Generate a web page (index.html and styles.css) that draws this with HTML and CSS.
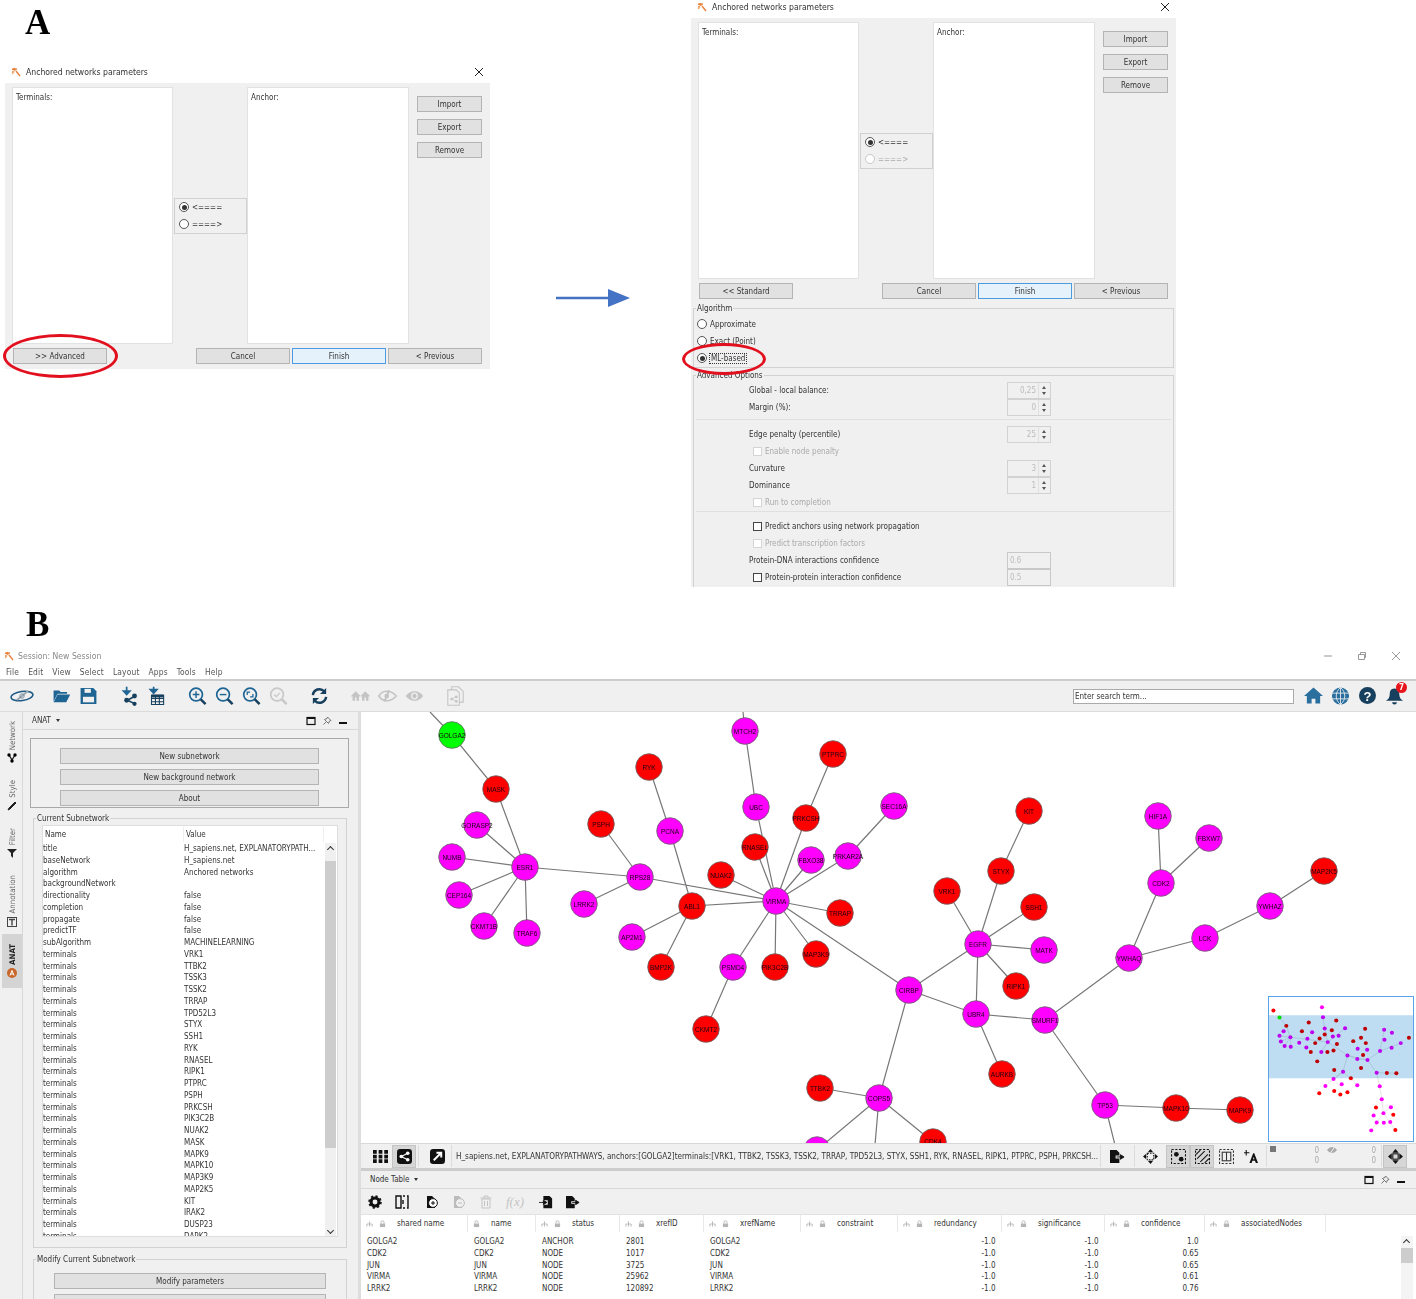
FILE: index.html
```html
<!DOCTYPE html>
<html lang="en">
<head>
  <meta charset="UTF-8">
  <title>Anchored networks figure</title>
  <link rel="stylesheet" href="styles.css">
</head>
<body>
  <svg class="defs" aria-hidden="true">
    <symbol id="wand" viewBox="0 0 10 10"><path d="M1 2l3 1M3 1l1 3M5 1v2M1 5h2M5 4l4 5" fill="none" stroke="#e8823a" stroke-width="1.4"/><path d="M1 7l2-2" stroke="#f3b27a" stroke-width="1.4"/></symbol>
    <symbol id="close" viewBox="0 0 10 10"><path d="M1 1l8 8M9 1l-8 8" stroke="#222" stroke-width="1"/></symbol>
    <symbol id="tree" viewBox="0 0 8 8"><path d="M4 1v3M1 7V4h6v3M4 4v3" fill="none" stroke="#b5b5b5" stroke-width="1"/></symbol>
    <symbol id="lock" viewBox="0 0 8 8"><rect x="1" y="3.5" width="6" height="4" fill="#b5b5b5"/><path d="M2.3 3.5V2a1.7 1.7 0 0 1 3.4 0v1.5" fill="none" stroke="#b5b5b5"/></symbol>
    <symbol id="win-max" viewBox="0 0 10 10"><rect x="1" y="1.5" width="8" height="7" fill="none" stroke="#111" stroke-width="1.2"/><rect x="1" y="1" width="8" height="2" fill="#111"/></symbol>
    <symbol id="win-pin" viewBox="0 0 10 10"><path d="M5.5 1L9 4.5 7.5 5 6.5 7.5 2.5 3.5 5 2.5zM4 6L1.5 8.5" fill="none" stroke="#666" stroke-width=".9"/></symbol>
    <symbol id="win-min" viewBox="0 0 10 10"><rect x="1" y="6" width="8" height="2" fill="#111"/></symbol>
  </svg>

  <div class="letter letter-a">A</div>

  <!-- panel A: standard dialog -->
  <section class="dialog dialog-std">
    <header class="dialog-title">
      <svg class="wand"><use href="#wand"/></svg>
      <span>Anchored networks parameters</span>
      <svg class="dialog-close"><use href="#close"/></svg>
    </header>
    <div class="dialog-panel">
      <div class="lists">
        <div class="list-box">Terminals:</div>
        <div class="direction">
          <label class="option"><i class="radio on"></i>&lt;====</label>
          <label class="option"><i class="radio"></i>====&gt;</label>
        </div>
        <div class="list-box">Anchor:</div>
        <div class="side-buttons">
          <button class="btn">Import</button>
          <button class="btn">Export</button>
          <button class="btn">Remove</button>
        </div>
      </div>
      <div class="dialog-actions">
        <button class="btn btn-wide">&gt;&gt; Advanced</button>
        <button class="btn btn-wide push">Cancel</button>
        <button class="btn btn-wide btn-default">Finish</button>
        <button class="btn btn-wide">&lt; Previous</button>
      </div>
    </div>
  </section>
  <div class="circle circle-advanced"></div>

  <svg class="next-arrow" viewBox="0 0 74 18"><path d="M0 9h54" stroke="#4472c4" stroke-width="2.4"/><path d="M52 0l22 9-22 9z" fill="#4472c4"/></svg>

  <!-- panel A: advanced dialog -->
  <section class="dialog dialog-adv">
    <header class="dialog-title">
      <svg class="wand"><use href="#wand"/></svg>
      <span>Anchored networks parameters</span>
      <svg class="dialog-close"><use href="#close"/></svg>
    </header>
    <div class="dialog-panel">
      <div class="lists">
        <div class="list-box">Terminals:</div>
        <div class="direction">
          <label class="option"><i class="radio on"></i>&lt;====</label>
          <label class="option muted"><i class="radio off"></i>====&gt;</label>
        </div>
        <div class="list-box">Anchor:</div>
        <div class="side-buttons">
          <button class="btn">Import</button>
          <button class="btn">Export</button>
          <button class="btn">Remove</button>
        </div>
      </div>
      <div class="dialog-actions">
        <button class="btn btn-wide">&lt;&lt; Standard</button>
        <button class="btn btn-wide push">Cancel</button>
        <button class="btn btn-wide btn-default">Finish</button>
        <button class="btn btn-wide">&lt; Previous</button>
      </div>

      <fieldset class="algo">
        <legend>Algorithm</legend>
        <label class="option"><i class="radio"></i>Approximate</label>
        <label class="option"><i class="radio"></i>Exact (Point)</label>
        <label class="option"><i class="radio on"></i><span class="focused">ML-based</span></label>
      </fieldset>

      <fieldset class="adv">
        <legend>Advanced Options</legend>
        <div class="adv-row"><span>Global - local balance:</span><div class="spin"><span>0,25</span><b></b></div></div>
        <div class="adv-row"><span>Margin (%):</span><div class="spin"><span>0</span><b></b></div></div>
        <hr class="adv-sep">
        <div class="adv-row"><span>Edge penalty (percentile)</span><div class="spin"><span>25</span><b></b></div></div>
        <div class="adv-row adv-check muted"><i class="check off"></i>Enable node penalty</div>
        <div class="adv-row"><span>Curvature</span><div class="spin"><span>3</span><b></b></div></div>
        <div class="adv-row"><span>Dominance</span><div class="spin"><span>1</span><b></b></div></div>
        <div class="adv-row adv-check muted"><i class="check off"></i>Run to completion</div>
        <hr class="adv-sep adv-sep-low">
        <div class="adv-row adv-check"><i class="check"></i>Predict anchors using network propagation</div>
        <div class="adv-row adv-check muted"><i class="check off"></i>Predict transcription factors</div>
        <div class="adv-row"><span>Protein-DNA interactions confidence</span><div class="field">0.6</div></div>
        <div class="adv-row"><span class="adv-check"><i class="check"></i>Protein-protein interaction confidence</span><div class="field">0.5</div></div>
      </fieldset>
    </div>
  </section>
  <div class="circle circle-ml"></div>

  <div class="letter letter-b">B</div>

  <!-- panel B: cytoscape window -->
  <section class="app">
    <div class="app-title">
      <svg class="wand"><use href="#wand"/></svg>
      <span>Session: New Session</span>
      <div class="win-controls">
        <svg viewBox="0 0 10 10"><path d="M1 5h8" stroke="#999"/></svg>
        <svg viewBox="0 0 10 10"><path d="M1.5 3.5h6v5h-6zM3.5 3.5v-2h5v5h-1" fill="none" stroke="#999"/></svg>
        <svg viewBox="0 0 10 10"><path d="M1 1l8 8M9 1l-8 8" stroke="#999"/></svg>
      </div>
    </div>
    <nav class="menu">
      <span>File</span><span>Edit</span><span>View</span><span>Select</span><span>Layout</span><span>Apps</span><span>Tools</span><span>Help</span>
    </nav>

    <div class="toolbar">
      <svg class="logo" viewBox="0 0 24 14"><ellipse cx="12" cy="7" rx="11" ry="4.6" transform="rotate(-8 12 7)" fill="none" stroke="#1d5a85" stroke-width="1.5"/><path d="M7 11C11 8 14 5 18 2" stroke="#9aa7b0" stroke-width="2" fill="none"/><circle cx="12" cy="7" r="2.2" fill="none" stroke="#7f95a5"/></svg>
      <div class="tool-group">
        <div class="tool"><svg viewBox="0 0 24 24"><path d="M2 19V5h7l2 2h8v2H7z" fill="#1f6594"/><path d="M7 10h16l-5 10H2z" fill="#1f6594"/></svg></div>
        <div class="tool"><svg viewBox="0 0 24 24"><path d="M2 2h16l4 4v16H2z" fill="#1f6594"/><rect x="7" y="3" width="8" height="5" fill="#f0f0f0"/><rect x="5" y="13" width="14" height="7" fill="#f0f0f0"/></svg></div>
      </div>
      <div class="tool-group">
        <div class="tool"><svg viewBox="0 0 24 28"><path d="M8 1v7M3.5 7L8 12l4.5-5z" fill="#1f6594" stroke="#1f6594" stroke-width="2.4"/><path d="M9 20l11-6M9 20l11 5" stroke="#17405e" stroke-width="2.2"/><circle cx="8" cy="20" r="3.4" fill="#17405e"/><circle cx="19" cy="14" r="3.4" fill="#17405e"/><circle cx="19" cy="25" r="3" fill="#17405e"/></svg></div>
        <div class="tool"><svg viewBox="0 0 24 28"><path d="M8 1v5M3.5 5L8 10l4.5-5z" fill="#1f6594" stroke="#1f6594" stroke-width="2.4"/><path d="M5 13h17v13H5zM5 17.5h17M5 22h17M10.5 13v13M16 13v13" fill="none" stroke="#17405e" stroke-width="1.5"/><rect x="5" y="12" width="17" height="4" fill="#17405e"/></svg></div>
      </div>
      <div class="tool-group">
        <div class="tool"><svg viewBox="0 0 20 20"><circle cx="8.5" cy="8.5" r="6.7" fill="none" stroke="#1f6594" stroke-width="1.8"/><path d="M13.5 13.5l5 5" stroke="#17405e" stroke-width="2.6"/><path d="M8.5 5v7M5 8.5h7" stroke="#1f6594" stroke-width="1.5"/></svg></div>
        <div class="tool"><svg viewBox="0 0 20 20"><circle cx="8.5" cy="8.5" r="6.7" fill="none" stroke="#1f6594" stroke-width="1.8"/><path d="M13.5 13.5l5 5" stroke="#17405e" stroke-width="2.6"/><path d="M5 8.5h7" stroke="#1f6594" stroke-width="1.5"/></svg></div>
        <div class="tool"><svg viewBox="0 0 20 20"><circle cx="8.5" cy="8.5" r="6.7" fill="none" stroke="#1f6594" stroke-width="1.8"/><path d="M13.5 13.5l5 5" stroke="#17405e" stroke-width="2.6"/><path d="M5.5 9V6h3M11.5 8v3h-3" fill="none" stroke="#1f6594" stroke-width="1.3"/></svg></div>
        <div class="tool"><svg viewBox="0 0 20 20"><circle cx="8.5" cy="8.5" r="6.7" fill="none" stroke="#c8c8c8" stroke-width="1.8"/><path d="M13.5 13.5l5 5" stroke="#c8c8c8" stroke-width="2.6"/><path d="M5.5 8.5l2.2 2.2 3.8-4" fill="none" stroke="#c8c8c8" stroke-width="1.4"/></svg></div>
      </div>
      <div class="tool-group">
        <div class="tool"><svg viewBox="0 0 20 20"><path d="M3 9a7 7 0 0 1 12-4M17 11a7 7 0 0 1-12 4" fill="none" stroke="#17405e" stroke-width="2.6"/><path d="M17 1.5V8h-6.5zM3 18.5V12h6.5z" fill="#17405e"/></svg></div>
      </div>
      <div class="tool-group">
        <div class="tool"><svg viewBox="0 0 24 16"><path d="M0 8l6-6 6 6-1 1-1-1v6H7v-4H5v4H2V8l-1 1zM12 8l6-6 6 6-1 1-1-1v6h-3v-4h-2v4h-3V8l-1 1z" fill="#c4c4c4"/></svg></div>
        <div class="tool"><svg viewBox="0 0 24 18"><path d="M1 9c5-8 15-8 22 0-7 8-17 8-22 0z" fill="none" stroke="#c4c4c4" stroke-width="2"/><path d="M14 2L8 16" stroke="#c4c4c4" stroke-width="2.4"/><circle cx="11" cy="9" r="3" fill="#c4c4c4"/></svg></div>
        <div class="tool"><svg viewBox="0 0 24 18"><path d="M1 9c5-8 17-8 22 0-5 8-17 8-22 0z" fill="#c4c4c4"/><circle cx="12" cy="9" r="4.4" fill="#f0f0f0"/><circle cx="12" cy="9" r="2.8" fill="#c4c4c4"/></svg></div>
      </div>
      <div class="tool-group">
        <div class="tool"><svg viewBox="0 0 22 26"><path d="M6 5V1h9l6 6v14h-5M1 5h11l4 4v16H1z" fill="none" stroke="#c4c4c4" stroke-width="1.4"/><path d="M6 17l6-3M6 17l6 3" stroke="#c4c4c4"/><circle cx="6" cy="17" r="1.8" fill="#c4c4c4"/><circle cx="12" cy="14" r="1.8" fill="#c4c4c4"/><circle cx="12" cy="20" r="1.8" fill="#c4c4c4"/></svg></div>
      </div>
      <input class="search" value="Enter search term...">
      <div class="tool"><svg viewBox="0 0 20 18"><path d="M0 9L10 0l10 9h-3v8h-5v-5H8v5H3V9z" fill="#2a6f9e"/></svg></div>
      <div class="tool"><svg viewBox="0 0 20 20"><circle cx="10" cy="10" r="9" fill="#2a6f9e"/><path d="M1 7h18M1 13h18M10 1v18M10 1c-6 5-6 13 0 18M10 1c6 5 6 13 0 18" fill="none" stroke="#f0f0f0" stroke-width=".9"/></svg></div>
      <div class="tool tool-help">?</div>
      <div class="tool tool-bell">
        <svg viewBox="0 0 20 20"><path d="M10 2c-4 0-5 3-5 6 0 4-2 6-4 7h18c-2-1-4-3-4-7 0-3-1-6-5-6zM7.5 16.5a2.5 2.5 0 0 0 5 0z" fill="#17405e"/></svg>
        <span class="badge">7</span>
      </div>
    </div>

    <div class="workspace">
      <aside class="side">
        <div class="tabs">
          <div class="tab"><span>Network</span><svg viewBox="0 0 10 10"><path d="M2 2l3 5 3-5" stroke="#222" stroke-width="1.4" fill="none"/><circle cx="2" cy="2" r="1.7"/><circle cx="8" cy="2" r="1.7"/><circle cx="5" cy="8" r="1.7"/></svg></div>
          <div class="tab"><span>Style</span><svg viewBox="0 0 10 10"><path d="M1 9l2-1 6-6-1-1-6 6z" fill="#222" stroke="#222"/></svg></div>
          <div class="tab"><span>Filter</span><svg viewBox="0 0 10 10"><path d="M0 1h10L6 5v5L4 8V5z" fill="#222"/></svg></div>
          <div class="tab"><span>Annotation</span><svg viewBox="0 0 10 10"><rect x=".5" y=".5" width="9" height="9" fill="none" stroke="#444"/><path d="M2 2.5h6M5 2.5v6" stroke="#444" stroke-width="1.4"/></svg></div>
          <div class="tab tab-active"><span>ANAT</span><svg viewBox="0 0 10 10"><circle cx="5" cy="5" r="5" fill="#c8662b"/><path d="M3 7.5L5 2.5l2 5M3.8 6h2.4" stroke="#fff" fill="none"/></svg></div>
        </div>
        <div class="side-panel">
          <div class="panel-head">
            <span>ANAT &nbsp;<i class="caret"></i></span>
            <div class="panel-icons">
              <svg><use href="#win-max"/></svg><svg><use href="#win-pin"/></svg><svg><use href="#win-min"/></svg>
            </div>
          </div>
          <div class="action-box">
            <button class="btn">New subnetwork</button>
            <button class="btn">New background network</button>
            <button class="btn">About</button>
          </div>
          <fieldset class="group">
            <legend>Current Subnetwork</legend>
            <div class="props">
              <div class="props-head"><span>Name</span><span>Value</span></div>
              <div class="props-scroll">
                <div class="props-rows">
                  <span>title</span><span>H_sapiens.net, EXPLANATORYPATH...</span>
                  <span>baseNetwork</span><span>H_sapiens.net</span>
                  <span>algorithm</span><span>Anchored networks</span>
                  <span>backgroundNetwork</span><span></span>
                  <span>directionality</span><span>false</span>
                  <span>completion</span><span>false</span>
                  <span>propagate</span><span>false</span>
                  <span>predictTF</span><span>false</span>
                  <span>subAlgorithm</span><span>MACHINELEARNING</span>
                  <span>terminals</span><span>VRK1</span>
                  <span>terminals</span><span>TTBK2</span>
                  <span>terminals</span><span>TSSK3</span>
                  <span>terminals</span><span>TSSK2</span>
                  <span>terminals</span><span>TRRAP</span>
                  <span>terminals</span><span>TPD52L3</span>
                  <span>terminals</span><span>STYX</span>
                  <span>terminals</span><span>SSH1</span>
                  <span>terminals</span><span>RYK</span>
                  <span>terminals</span><span>RNASEL</span>
                  <span>terminals</span><span>RIPK1</span>
                  <span>terminals</span><span>PTPRC</span>
                  <span>terminals</span><span>PSPH</span>
                  <span>terminals</span><span>PRKCSH</span>
                  <span>terminals</span><span>PIK3C2B</span>
                  <span>terminals</span><span>NUAK2</span>
                  <span>terminals</span><span>MASK</span>
                  <span>terminals</span><span>MAPK9</span>
                  <span>terminals</span><span>MAPK10</span>
                  <span>terminals</span><span>MAP3K9</span>
                  <span>terminals</span><span>MAP2K5</span>
                  <span>terminals</span><span>KIT</span>
                  <span>terminals</span><span>IRAK2</span>
                  <span>terminals</span><span>DUSP23</span>
                  <span>terminals</span><span>DAPK2</span>
                </div>
                <div class="scrollbar"><i class="scroll-up"></i><i class="scroll-thumb"></i><i class="scroll-down"></i></div>
              </div>
            </div>
          </fieldset>
          <fieldset class="group group-modify">
            <legend>Modify Current Subnetwork</legend>
            <button class="btn">Modify parameters</button>
            <button class="btn"></button>
          </fieldset>
        </div>
      </aside>

      <div class="main">
        <div class="canvas">
          <svg class="network" viewBox="361 712 1055 431">
            <path class="edges" d="M430 712L452 735 M452 735L496 789 M496 789L525 867 M477 825L525 867 M452 857L525 867
              M459 895L525 867 M484 926L525 867 M527 933L525 867 M525 867L640 877 M601 824L640 877 M584 904L640 877
              M640 877L776 901 M649 767L670 831 M670 831L692 906 M692 906L776 901 M632 937L692 906 M661 967L692 906
              M743 712L745 731 M745 731L756 807 M756 807L776 901 M833 754L806 818 M806 818L776 901 M755 847L776 901
              M811 860L776 901 M894 806L848 856 M848 856L776 901 M721 875L776 901 M840 913L776 901 M816 954L776 901
              M775 967L776 901 M733 967L776 901 M706 1029L733 967 M776 901L909 990 M909 990L978 944 M909 990L976 1014
              M909 990L879 1098 M978 944L976 1014 M978 944L1001 871 M1001 871L1029 811 M947 891L978 944 M1034 907L978 944
              M1044 950L978 944 M1016 986L978 944 M976 1014L1045 1020 M976 1014L1002 1074 M1045 1020L1129 958
              M1129 958L1161 883 M1161 883L1158 816 M1161 883L1209 838 M1129 958L1205 938 M1205 938L1270 906
              M1270 906L1324 871 M1045 1020L1105 1105 M1105 1105L1176 1108 M1176 1108L1240 1110 M1105 1105L1115 1145
              M879 1098L820 1088 M879 1098L933 1142 M879 1098L817 1150 M879 1098L875 1145"/>
            <circle class="green" cx="452" cy="735"/><text x="452" y="735">GOLGA2</text>
            <circle class="red" cx="496" cy="789"/><text x="496" y="789">MASK</text>
            <circle class="pink" cx="477" cy="825"/><text x="477" y="825">GORASP2</text>
            <circle class="pink" cx="452" cy="857"/><text x="452" y="857">NUMB</text>
            <circle class="pink" cx="525" cy="867"/><text x="525" y="867">ESR1</text>
            <circle class="pink" cx="459" cy="895"/><text x="459" y="895">CEP164</text>
            <circle class="pink" cx="484" cy="926"/><text x="484" y="926">CKMT1B</text>
            <circle class="pink" cx="527" cy="933"/><text x="527" y="933">TRAF6</text>
            <circle class="red" cx="649" cy="767"/><text x="649" y="767">RYK</text>
            <circle class="red" cx="601" cy="824"/><text x="601" y="824">PSPH</text>
            <circle class="pink" cx="670" cy="831"/><text x="670" y="831">PCNA</text>
            <circle class="pink" cx="640" cy="877"/><text x="640" y="877">RPS28</text>
            <circle class="pink" cx="584" cy="904"/><text x="584" y="904">LRRK2</text>
            <circle class="red" cx="692" cy="906"/><text x="692" y="906">ABL1</text>
            <circle class="pink" cx="632" cy="937"/><text x="632" y="937">AP2M1</text>
            <circle class="red" cx="661" cy="967"/><text x="661" y="967">BMP2K</text>
            <circle class="pink" cx="745" cy="731"/><text x="745" y="731">MTCH2</text>
            <circle class="red" cx="833" cy="754"/><text x="833" y="754">PTPRC</text>
            <circle class="pink" cx="756" cy="807"/><text x="756" y="807">UBC</text>
            <circle class="red" cx="806" cy="818"/><text x="806" y="818">PRKCSH</text>
            <circle class="red" cx="755" cy="847"/><text x="755" y="847">RNASEL</text>
            <circle class="pink" cx="811" cy="860"/><text x="811" y="860">FBXO38</text>
            <circle class="pink" cx="848" cy="856"/><text x="848" y="856">PRKAR2A</text>
            <circle class="red" cx="721" cy="875"/><text x="721" y="875">NUAK2</text>
            <circle class="pink" cx="776" cy="901"/><text x="776" y="901">VIRMA</text>
            <circle class="red" cx="840" cy="913"/><text x="840" y="913">TRRAP</text>
            <circle class="red" cx="816" cy="954"/><text x="816" y="954">MAP3K9</text>
            <circle class="red" cx="775" cy="967"/><text x="775" y="967">PIK3C2B</text>
            <circle class="pink" cx="733" cy="967"/><text x="733" y="967">PSMD4</text>
            <circle class="red" cx="706" cy="1029"/><text x="706" y="1029">CKMT2</text>
            <circle class="pink" cx="894" cy="806"/><text x="894" y="806">SEC16A</text>
            <circle class="red" cx="1029" cy="811"/><text x="1029" y="811">KIT</text>
            <circle class="pink" cx="1158" cy="816"/><text x="1158" y="816">HIF1A</text>
            <circle class="pink" cx="1209" cy="838"/><text x="1209" y="838">FBXW7</text>
            <circle class="red" cx="1324" cy="871"/><text x="1324" y="871">MAP2K5</text>
            <circle class="red" cx="1001" cy="871"/><text x="1001" y="871">STYX</text>
            <circle class="red" cx="947" cy="891"/><text x="947" y="891">VRK1</text>
            <circle class="red" cx="1034" cy="907"/><text x="1034" y="907">SSH1</text>
            <circle class="pink" cx="1161" cy="883"/><text x="1161" y="883">CDK2</text>
            <circle class="pink" cx="1270" cy="906"/><text x="1270" y="906">YWHAZ</text>
            <circle class="pink" cx="1205" cy="938"/><text x="1205" y="938">LCK</text>
            <circle class="pink" cx="978" cy="944"/><text x="978" y="944">EGFR</text>
            <circle class="pink" cx="1044" cy="950"/><text x="1044" y="950">MATK</text>
            <circle class="pink" cx="1129" cy="958"/><text x="1129" y="958">YWHAQ</text>
            <circle class="red" cx="1016" cy="986"/><text x="1016" y="986">RIPK1</text>
            <circle class="pink" cx="909" cy="990"/><text x="909" y="990">CIRBP</text>
            <circle class="pink" cx="976" cy="1014"/><text x="976" y="1014">UBR4</text>
            <circle class="pink" cx="1045" cy="1020"/><text x="1045" y="1020">SMURF1</text>
            <circle class="red" cx="1002" cy="1074"/><text x="1002" y="1074">AURKB</text>
            <circle class="pink" cx="1105" cy="1105"/><text x="1105" y="1105">TP53</text>
            <circle class="red" cx="1176" cy="1108"/><text x="1176" y="1108">MAPK10</text>
            <circle class="red" cx="1240" cy="1110"/><text x="1240" y="1110">MAPK9</text>
            <circle class="pink" cx="879" cy="1098"/><text x="879" y="1098">COPS5</text>
            <circle class="red" cx="820" cy="1088"/><text x="820" y="1088">TTBK2</text>
            <circle class="red" cx="933" cy="1142"/><text x="933" y="1141">CDK4</text>
            <circle class="pink" cx="817" cy="1150"/>
          </svg>
          <div class="birdseye">
            <svg viewBox="1137 680 424 434" preserveAspectRatio="none">
              <path class="mini-edges" d="M1168 742L1188 767 1200 801 1310 816 1368 856 1427 870 1397 867 1368 856 1355 905 1327 927
                M1296 741L1301 775 1310 816 M1200 801L1168 797 M1200 801L1172 814 M1200 801L1183 828 M1200 801L1201 830
                M1310 816L1361 774 M1310 816L1291 846 M1427 870L1464 843 1525 819 M1464 843L1476 779 M1427 870L1454 908 1512 910
                M1454 908L1463 949 1469 988 1474 1030 1438 1082 M1474 1030L1496 1012 M1474 1030L1509 1081 M1355 905L1303 948 M1355 905L1397 946"/>
              <g class="mini-pink">
                <circle cx="1293" cy="711"/><circle cx="1296" cy="741"/><circle cx="1180" cy="783"/><circle cx="1168" cy="797"/><circle cx="1200" cy="801"/>
                <circle cx="1172" cy="814"/><circle cx="1183" cy="828"/><circle cx="1201" cy="830"/><circle cx="1226" cy="818"/><circle cx="1250" cy="806"/>
                <circle cx="1264" cy="786"/><circle cx="1247" cy="832"/><circle cx="1291" cy="846"/><circle cx="1301" cy="775"/><circle cx="1310" cy="816"/>
                <circle cx="1325" cy="799"/><circle cx="1342" cy="797"/><circle cx="1361" cy="774"/><circle cx="1368" cy="856"/><circle cx="1398" cy="836"/>
                <circle cx="1426" cy="839"/><circle cx="1397" cy="867"/><circle cx="1427" cy="870"/><circle cx="1464" cy="843"/><circle cx="1476" cy="779"/>
                <circle cx="1499" cy="788"/><circle cx="1477" cy="809"/><circle cx="1498" cy="833"/><circle cx="1525" cy="819"/><circle cx="1454" cy="908"/>
                <circle cx="1355" cy="905"/><circle cx="1327" cy="927"/><circle cx="1303" cy="948"/><circle cx="1351" cy="943"/><circle cx="1397" cy="946"/>
                <circle cx="1463" cy="949"/><circle cx="1469" cy="988"/><circle cx="1496" cy="1012"/><circle cx="1474" cy="1030"/><circle cx="1445" cy="1037"/>
                <circle cx="1454" cy="1058"/><circle cx="1475" cy="1059"/><circle cx="1494" cy="1057"/><circle cx="1438" cy="1082"/>
              </g>
              <g class="mini-red">
                <circle cx="1150" cy="721"/><circle cx="1335" cy="751"/><circle cx="1254" cy="757"/><circle cx="1188" cy="767"/><circle cx="1234" cy="783"/>
                <circle cx="1322" cy="780"/><circle cx="1301" cy="793"/><circle cx="1286" cy="805"/><circle cx="1273" cy="819"/><circle cx="1260" cy="846"/>
                <circle cx="1309" cy="846"/><circle cx="1337" cy="822"/><circle cx="1327" cy="841"/><circle cx="1279" cy="874"/><circle cx="1385" cy="813"/>
                <circle cx="1408" cy="803"/><circle cx="1420" cy="776"/><circle cx="1422" cy="819"/><circle cx="1414" cy="855"/><circle cx="1408" cy="894"/>
                <circle cx="1329" cy="900"/><circle cx="1484" cy="909"/><circle cx="1512" cy="910"/><circle cx="1549" cy="803"/><circle cx="1378" cy="925"/>
                <circle cx="1285" cy="970"/><circle cx="1329" cy="963"/><circle cx="1347" cy="974"/><circle cx="1368" cy="967"/><circle cx="1452" cy="1013"/>
                <circle cx="1503" cy="1035"/><circle cx="1509" cy="1081"/>
              </g>
              <circle class="mini-green" cx="1168" cy="742"/>
              <rect class="mini-view" x="1137" y="735" width="424" height="190"/>
            </svg>
          </div>
        </div>

        <div class="statusbar">
          <div class="sb-tool"><svg viewBox="0 0 16 14"><path d="M0 0h4v4H0zM6 0h4v4H6zM12 0h4v4h-4zM0 5h4v4H0zM6 5h4v4H6zM12 5h4v4h-4zM0 10h4v4H0zM6 10h4v4H6zM12 10h4v4h-4z" fill="#111"/></svg></div>
          <div class="sb-tool sb-on"><svg viewBox="0 0 14 14"><rect width="14" height="14" rx="3" fill="#111"/><path d="M4 7l6-3M4 7l6 3" stroke="#fff"/><circle cx="4" cy="7" r="1.7" fill="#fff"/><circle cx="10" cy="4" r="1.7" fill="#fff"/><circle cx="10" cy="10" r="1.7" fill="#fff"/></svg></div>
          <i class="sb-sep sb-sep-a"></i>
          <div class="sb-tool sb-arrow"><svg viewBox="0 0 14 14"><rect width="14" height="14" rx="3" fill="#111"/><path d="M3.5 10.5L10 4M6 3.5h4.5V8" fill="none" stroke="#fff" stroke-width="1.8"/></svg></div>
          <i class="sb-sep sb-sep-a"></i>
          <div class="sb-text">H_sapiens.net, EXPLANATORYPATHWAYS, anchors:[GOLGA2]terminals:[VRK1, TTBK2, TSSK3, TSSK2, TRRAP, TPD52L3, STYX, SSH1, RYK, RNASEL, RIPK1, PTPRC, PSPH, PRKCSH...</div>
          <i class="sb-sep"></i>
          <div class="sb-tool sb-export"><svg viewBox="0 0 16 14"><path d="M0 0h7l3 3v3H6v3h4v5H0z" fill="#111"/><path d="M7 7.5h5M11 5l4 2.5L11 10z" fill="#111" stroke="#111"/></svg></div>
          <i class="sb-sep sb-sep-b"></i>
          <div class="sb-tool sb-move"><svg viewBox="0 0 14 14"><path d="M7 0l2.5 3h-5zM7 14l-2.5-3h5zM0 7l3-2.5v5zM14 7l-3 2.5v-5z" fill="#111"/><rect x="4" y="4" width="6" height="6" fill="none" stroke="#111" stroke-dasharray="1.5 1"/></svg></div>
          <div class="sb-tool sb-on sb-first"><svg viewBox="0 0 14 14"><rect x=".5" y=".5" width="13" height="13" fill="none" stroke="#111" stroke-dasharray="2 1.5"/><circle cx="5" cy="5" r="2.2" fill="#111"/><circle cx="9.5" cy="9.5" r="2.2" fill="#111"/></svg></div>
          <div class="sb-tool sb-on"><svg viewBox="0 0 14 14"><rect x=".5" y=".5" width="13" height="13" fill="none" stroke="#111" stroke-dasharray="2 1.5"/><path d="M1 5l4-4M2 9l7-7M5 12l7-7M9 13l4-4" stroke="#111"/></svg></div>
          <div class="sb-tool"><svg viewBox="0 0 14 14"><rect x=".5" y=".5" width="13" height="13" fill="none" stroke="#333" stroke-dasharray="2 1.5"/><rect x="3" y="3" width="8" height="8" fill="none" stroke="#333"/><path d="M7 3v8" stroke="#333"/></svg></div>
          <div class="sb-tool"><svg viewBox="0 0 14 14"><path d="M3 1v5M1 3.5h5" stroke="#111"/><path d="M6 13l3.5-9h1L14 13h-2l-.8-2H8.8L8 13zM9.3 9.5h1.4L10 7.5z" fill="#111"/></svg></div>
          <i class="sb-sep sb-sep-c"></i>
          <div class="counts">
            <div class="count"><i class="count-check"></i><span>0<br>0</span></div>
            <div class="count"><svg viewBox="0 0 10 8"><path d="M0 4c3-4 7-4 10 0-3 4-7 4-10 0z" fill="#aaa"/><path d="M8 0L3 8" stroke="#f0f0f0"/></svg><span>0<br>0</span></div>
          </div>
          <i class="sb-sep"></i>
          <div class="sb-tool sb-on sb-nav"><svg viewBox="0 0 14 14"><path d="M7 0l3 3.5H4zM7 14l-3-3.5h6zM0 7l3.5-3v6zM14 7l-3.5 3V4z" fill="#111"/><rect x="4.5" y="4.5" width="5" height="5" fill="none" stroke="#111"/></svg></div>
        </div>

        <div class="table-panel">
          <div class="panel-head table-head">
            <span>Node Table &nbsp;<i class="caret"></i></span>
            <div class="panel-icons">
              <svg><use href="#win-max"/></svg><svg><use href="#win-pin"/></svg><svg><use href="#win-min"/></svg>
            </div>
          </div>
          <div class="table-tools">
            <svg viewBox="0 0 12 12"><circle cx="6" cy="6" r="3.4" fill="none" stroke="#111" stroke-width="2.6"/><circle cx="6" cy="6" r="5" fill="none" stroke="#111" stroke-width="1.6" stroke-dasharray="1.9 2"/></svg>
            <svg viewBox="0 0 14 14"><path d="M1 1h5v12H1zM8 1h2M12 1h1v12h-1M8 13h2M8 5v4" fill="none" stroke="#111" stroke-width="1.4"/></svg>
            <svg class="tt-add" viewBox="0 0 14 14"><path d="M2 1h5l3 3v9H2z" fill="#111"/><circle cx="8" cy="8" r="4.4" fill="#fff" stroke="#111"/><path d="M8 6v4M6 8h4" stroke="#111"/></svg>
            <svg class="tt-del" viewBox="0 0 14 14"><path d="M2 1h5l3 3v9H2z" fill="#bbb"/><circle cx="8" cy="8" r="4.4" fill="#f0f0f0" stroke="#bbb"/><path d="M6 8h4" stroke="#bbb"/></svg>
            <svg class="tt-trash" viewBox="0 0 14 14"><path d="M3 4h8v9H3zM1.5 3h11M5 3V1h4v2M5.5 6v5M8.5 6v5" fill="none" stroke="#c4c4c4"/></svg>
            <span class="tt-fx">f(x)</span>
            <svg class="tt-import" viewBox="0 0 16 14"><path d="M5 0h7l3 3v11H5v-4h5V5H5z" fill="#111"/><path d="M0 7.5h6M5 5l4 2.5L5 10z" fill="#111" stroke="#111"/></svg>
            <svg class="tt-export" viewBox="0 0 16 14"><path d="M0 0h7l3 3v3H6v3h4v5H0z" fill="#111"/><path d="M7 7.5h5M11 5l4 2.5L11 10z" fill="#111" stroke="#111"/></svg>
          </div>
          <div class="node-table">
            <div class="cell-head"><span class="meta"><svg><use href="#tree"/></svg><svg><use href="#lock"/></svg></span>shared name</div>
            <div class="cell-head head-name"><span class="meta"><svg><use href="#lock"/></svg></span>name</div>
            <div class="cell-head"><span class="meta"><svg><use href="#tree"/></svg><svg><use href="#lock"/></svg></span>status</div>
            <div class="cell-head"><span class="meta"><svg><use href="#tree"/></svg><svg><use href="#lock"/></svg></span>xrefID</div>
            <div class="cell-head"><span class="meta"><svg><use href="#tree"/></svg><svg><use href="#lock"/></svg></span>xrefName</div>
            <div class="cell-head"><span class="meta"><svg><use href="#tree"/></svg><svg><use href="#lock"/></svg></span>constraint</div>
            <div class="cell-head"><span class="meta"><svg><use href="#tree"/></svg><svg><use href="#lock"/></svg></span>redundancy</div>
            <div class="cell-head"><span class="meta"><svg><use href="#tree"/></svg><svg><use href="#lock"/></svg></span>significance</div>
            <div class="cell-head"><span class="meta"><svg><use href="#tree"/></svg><svg><use href="#lock"/></svg></span>confidence</div>
            <div class="cell-head"><span class="meta"><svg><use href="#tree"/></svg><svg><use href="#lock"/></svg></span>associatedNodes</div>

            <span>GOLGA2</span><span>GOLGA2</span><span>ANCHOR</span><span>2801</span><span>GOLGA2</span><span></span><span class="num">-1.0</span><span class="num">-1.0</span><span class="num">1.0</span><span></span>
            <span>CDK2</span><span>CDK2</span><span>NODE</span><span>1017</span><span>CDK2</span><span></span><span class="num">-1.0</span><span class="num">-1.0</span><span class="num">0.65</span><span></span>
            <span>JUN</span><span>JUN</span><span>NODE</span><span>3725</span><span>JUN</span><span></span><span class="num">-1.0</span><span class="num">-1.0</span><span class="num">0.65</span><span></span>
            <span>VIRMA</span><span>VIRMA</span><span>NODE</span><span>25962</span><span>VIRMA</span><span></span><span class="num">-1.0</span><span class="num">-1.0</span><span class="num">0.61</span><span></span>
            <span>LRRK2</span><span>LRRK2</span><span>NODE</span><span>120892</span><span>LRRK2</span><span></span><span class="num">-1.0</span><span class="num">-1.0</span><span class="num">0.76</span><span></span>
          </div>
          <div class="table-scroll"><i class="scroll-up"></i><i class="scroll-thumb"></i></div>
        </div>
      </div>
    </div>
  </section>
</body>
</html>
```

FILE: styles.css
```css
body {
  margin: 0;
  width: 1416px;
  height: 1299px;
  position: relative;
  overflow: hidden;
  background-color: #fff;
  font-family: "DejaVu Sans Condensed", "Liberation Sans", sans-serif;
  font-size: 8px;
  color: #333;
}

.defs {
  display: none;
}

.letter {
  position: absolute;
  font-family: "Liberation Serif", serif;
  font-weight: bold;
  font-size: 35px;
  line-height: 35px;
  color: #000;
}

.letter-a {
  left: 25px;
  top: 5px;
}

.letter-b {
  left: 26px;
  top: 607px;
}

.next-arrow {
  position: absolute;
  left: 556px;
  top: 289px;
  width: 74px;
  height: 18px;
}

.circle {
  position: absolute;
  box-sizing: border-box;
  border: 3px solid #e2101e;
  border-radius: 50%;
}

.circle-advanced {
  left: 3px;
  top: 334px;
  width: 115px;
  height: 44px;
}

.circle-ml {
  left: 682px;
  top: 343px;
  width: 84px;
  height: 32px;
}

/* dialogs */
.dialog {
  position: absolute;
  width: 485px;
}

.dialog-std {
  left: 5px;
  top: 61px;
}

.dialog-adv {
  left: 691px;
  top: -4px;
  height: 591px;
  overflow: hidden;
}

.dialog-title {
  height: 22px;
  display: flex;
  align-items: center;
  gap: 5px;
  padding-left: 6px;
  font-size: 8.6px;
}

.wand {
  width: 10px;
  height: 10px;
  flex: none;
}

.dialog-close {
  width: 10px;
  height: 10px;
  margin-left: auto;
  margin-right: 6px;
  flex: none;
}

.dialog-panel {
  background-color: #f0f0f0;
  padding: 4px 8px 5px 7px;
}

.lists {
  display: grid;
  grid-template-columns: 162px 73px 162px 73px;
  height: 257px;
}

.list-box {
  box-sizing: border-box;
  background-color: #fff;
  border: 1px solid #e2e2e2;
  padding: 5px 3px;
  margin-right: 1px;
}

.list-box:nth-child(3) {
  margin-right: 0;
}

.direction {
  align-self: center;
  box-sizing: border-box;
  height: 36px;
  border: 1px solid #d0d0d0;
  display: flex;
  flex-direction: column;
  justify-content: space-around;
  padding-left: 4px;
}

.option {
  display: flex;
  align-items: center;
  gap: 3px;
  height: 17px;
}

.radio {
  box-sizing: border-box;
  width: 10px;
  height: 10px;
  flex: none;
  border: 1px solid #555;
  border-radius: 50%;
  background-color: #fff;
  display: flex;
  align-items: center;
  justify-content: center;
}

.radio.on::after {
  content: '';
  width: 5px;
  height: 5px;
  border-radius: 50%;
  background-color: #333;
}

.radio.off {
  border-color: #c8c8c8;
}

.muted {
  color: #aaa;
}

.focused {
  outline: 1px dotted #333;
  padding: 0 1px;
}

.side-buttons {
  margin-left: 8px;
  padding-top: 9px;
  display: flex;
  flex-direction: column;
  gap: 7px;
}

.btn {
  display: block;
  box-sizing: border-box;
  height: 16px;
  padding: 0;
  background-color: #e1e1e1;
  border: 1px solid #b4b4b4;
  font-family: inherit;
  font-size: 8px;
  color: #333;
}

.dialog-actions {
  display: flex;
  gap: 2px;
  margin-top: 4px;
  padding-left: 1px;
}

.btn-wide {
  width: 94px;
}

.push {
  margin-left: auto;
}

.btn-default {
  background-color: #e5f1fb;
  border-color: #4a9be0;
}

fieldset {
  margin: 0;
  min-width: 0;
  border: 1px solid #d2d2d2;
  padding: 0;
}

legend {
  padding: 0 1px;
  margin-left: 2px;
  line-height: 11px;
}

.algo {
  margin: 4px -6px 0 -5px;
  padding: 1.5px 0 0;
}

.algo .option {
  margin-left: 3px;
}

.adv {
  margin: 2px -6px 0 -5px;
  padding: 1px 0 30px;
}

.adv-row {
  display: flex;
  align-items: center;
  justify-content: space-between;
  height: 17px;
  margin-left: 55px;
  margin-right: 122px;
}

.adv-check {
  justify-content: flex-start;
  display: flex;
  align-items: center;
  gap: 3px;
  padding-left: 4px;
}

.check {
  box-sizing: border-box;
  width: 9px;
  height: 9px;
  flex: none;
  border: 1px solid #444;
  background-color: #fff;
}

.check.off {
  border-color: #d4d4d4;
}

.adv-sep {
  height: 0;
  border: 0;
  border-top: 1px solid #e0e0e0;
  margin: 3px 2px 6px;
}

.adv-sep-low {
  margin: 0 2px 6px;
}

.spin {
  box-sizing: border-box;
  width: 44px;
  height: 17px;
  border: 1px solid #d2d2d2;
  display: flex;
  align-items: center;
  color: #bbb;
  font-size: 8px;
}

.spin span {
  flex: 1;
  text-align: right;
  padding-right: 2px;
}

.spin b {
  width: 11px;
  height: 15px;
  flex: none;
  background-color: #f0f0f0;
  border-left: 1px solid #e0e0e0;
  position: relative;
}

.spin b::before,
.spin b::after {
  content: '';
  position: absolute;
  left: 3px;
  border-left: 2.5px solid transparent;
  border-right: 2.5px solid transparent;
}

.spin b::before {
  top: 3px;
  border-bottom: 3px solid #555;
}

.spin b::after {
  bottom: 3px;
  border-top: 3px solid #555;
}

.field {
  box-sizing: border-box;
  width: 44px;
  height: 17px;
  line-height: 15px;
  padding-left: 2px;
  border: 1px solid #c8c8c8;
  color: #bbb;
}

/* app window */
.app {
  position: absolute;
  left: 0;
  top: 648px;
  width: 1416px;
  height: 651px;
  display: flex;
  flex-direction: column;
  overflow: hidden;
}

.app-title {
  height: 16px;
  flex: none;
  display: flex;
  align-items: center;
  gap: 4px;
  padding-left: 4px;
  color: #888;
  font-size: 8.6px;
}

.win-controls {
  margin-left: auto;
  margin-right: 15px;
  display: flex;
  gap: 24px;
}

.win-controls svg {
  width: 10px;
  height: 10px;
}

.menu {
  height: 15px;
  flex: none;
  display: flex;
  align-items: center;
  gap: 9px;
  padding-left: 6px;
  color: #555;
  font-size: 8.4px;
  letter-spacing: 0.15px;
}

.toolbar {
  height: 30px;
  flex: none;
  display: flex;
  align-items: center;
  background-color: #f0f0f0;
  border-top: 2px solid #ccc;
  border-bottom: 1px solid #dcdcdc;
}

.logo {
  width: 24px;
  height: 14px;
  margin-left: 10px;
  flex: none;
}

.tool-group {
  display: flex;
  margin-left: 14px;
}

.tool {
  width: 27px;
  height: 24px;
  flex: none;
  display: flex;
  align-items: center;
  justify-content: center;
}

.tool svg {
  width: 19px;
  height: 20px;
}

.search {
  box-sizing: border-box;
  width: 221px;
  height: 15px;
  margin: 0 6px 0 auto;
  padding: 0 1px;
  background-color: #fff;
  border: 1px solid #aaa;
  font-family: inherit;
  font-size: 8px;
  color: #333;
}

.tool-help {
  font-family: "Liberation Sans", sans-serif;
  font-weight: bold;
  font-size: 13px;
  color: #fff;
  position: relative;
  z-index: 0;
}

.tool-help::before {
  content: '';
  position: absolute;
  left: 5px;
  top: 3px;
  width: 17px;
  height: 17px;
  border-radius: 50%;
  background-color: #17405e;
  z-index: -1;
}

.tool-bell {
  position: relative;
  margin-right: 8px;
}

.badge {
  position: absolute;
  right: 1px;
  top: -2px;
  width: 11px;
  height: 11px;
  line-height: 11px;
  border-radius: 50%;
  background-color: #e8141c;
  color: #fff;
  font-size: 8px;
  font-weight: bold;
  text-align: center;
}

.workspace {
  flex: 1;
  min-height: 0;
  display: flex;
}

/* left side */
.side {
  width: 361px;
  flex: none;
  box-sizing: border-box;
  display: flex;
  background-color: #f0f0f0;
  border-right: 3px solid #ddd;
  padding-left: 2px;
}

.tabs {
  width: 20px;
  flex: none;
  border-right: 1px solid #d8d8d8;
  padding-top: 1px;
}

.tab {
  display: flex;
  flex-direction: column;
  align-items: center;
  gap: 3px;
  padding: 8px 0 9px;
  color: #666;
  font-size: 7.8px;
}

.tab span {
  writing-mode: vertical-rl;
  transform: rotate(180deg);
}

.tab svg {
  width: 10px;
  height: 10px;
}

.tab-active {
  background-color: #d4d4d4;
  color: #222;
  font-weight: bold;
  padding: 10px 0;
  margin-top: -2px;
}

.side-panel {
  flex: 1;
  min-width: 0;
  padding: 0 9px 0 7px;
}

.panel-head {
  height: 17px;
  margin: 0 -9px 0 -7px;
  padding: 0 9px;
  display: flex;
  align-items: center;
  justify-content: space-between;
  border-bottom: 1px solid #d8d8d8;
}

.caret {
  display: inline-block;
  vertical-align: middle;
  border-left: 2.5px solid transparent;
  border-right: 2.5px solid transparent;
  border-top: 3px solid #333;
}

.panel-icons {
  display: flex;
  gap: 6px;
  margin-right: 1px;
}

.panel-icons svg {
  width: 10px;
  height: 10px;
}

.action-box {
  box-sizing: border-box;
  height: 70px;
  margin-top: 8px;
  padding-top: 9px;
  border: 1px solid #a8a8a8;
  display: flex;
  flex-direction: column;
  align-items: center;
  gap: 5px;
  overflow: hidden;
}

.action-box .btn {
  width: 259px;
  flex: none;
}

.group {
  margin: 5px 2px 0 3px;
}

.props {
  box-sizing: border-box;
  height: 412px;
  margin: 1px 8px 10px;
  border: 1px solid #dedede;
  background-color: #fff;
}

.props-head {
  height: 17px;
  display: grid;
  grid-template-columns: 141px 1fr;
  align-items: center;
  margin-right: 13px;
}

.props-head span {
  padding-left: 2px;
  line-height: 15px;
  border-right: 1px solid #eee;
}

.props-scroll {
  display: flex;
  height: 393px;
  overflow: hidden;
}

.props-rows {
  flex: 1;
  min-width: 0;
  display: grid;
  grid-template-columns: 141px 1fr;
  grid-auto-rows: 11.75px;
  line-height: 11.75px;
  white-space: nowrap;
}

.scrollbar {
  width: 11px;
  flex: none;
  margin-right: 1px;
  background-color: #f0f0f0;
  position: relative;
}

.scroll-up,
.scroll-down {
  position: absolute;
  left: 3px;
  width: 4px;
  height: 4px;
  border-left: 1px solid #333;
  border-top: 1px solid #333;
}

.scroll-up {
  top: 4px;
  transform: rotate(45deg);
}

.scroll-down {
  bottom: 3px;
  transform: rotate(225deg);
}

.scroll-thumb {
  position: absolute;
  left: 0;
  right: 0;
  top: 18px;
  height: 287px;
  background-color: #cdcdcd;
}

.group-modify {
  margin-top: 6px;
  padding: 8px 0 0;
}

.group-modify .btn {
  width: 272px;
  margin: 0 0 5px 20px;
}

/* right side */
.main {
  flex: 1;
  min-width: 0;
  display: flex;
  flex-direction: column;
}

.canvas {
  height: 431px;
  flex: none;
  position: relative;
  overflow: hidden;
  background-color: #fff;
}

.network {
  display: block;
  width: 1055px;
  height: 431px;
}

.edges {
  fill: none;
  stroke: #777;
  stroke-width: 1.2;
}

.network circle {
  r: 13.3px;
  stroke: #666;
  stroke-width: 0.8;
}

.pink {
  fill: #ff00ff;
}

.red {
  fill: #ff0000;
}

.green {
  fill: #00ff00;
}

.network text {
  font-family: "Liberation Sans", sans-serif;
  font-size: 6.5px;
  fill: #1a0014;
  text-anchor: middle;
  dominant-baseline: central;
}

.birdseye {
  position: absolute;
  right: 2px;
  bottom: 1px;
  box-sizing: border-box;
  width: 146px;
  height: 146px;
  background-color: #fff;
  border: 1px solid #5aa3e6;
}

.birdseye svg {
  display: block;
  width: 144px;
  height: 144px;
}

.mini-edges {
  fill: none;
  stroke: #cfcfcf;
  stroke-width: 1.5;
}

.birdseye circle {
  r: 6px;
}

.mini-pink {
  fill: #ff00ff;
}

.mini-red {
  fill: #ff0000;
}

.mini-green {
  fill: #00ff00;
}

.mini-view {
  fill: #bedcf2;
  mix-blend-mode: multiply;
}

.statusbar {
  height: 25px;
  flex: none;
  box-sizing: border-box;
  display: flex;
  align-items: center;
  padding-left: 7px;
  background-color: #f0f0f0;
  border-top: 1px solid #d8d8d8;
}

.sb-tool {
  width: 24px;
  height: 23px;
  flex: none;
  box-sizing: border-box;
  display: flex;
  align-items: center;
  justify-content: center;
}

.sb-tool svg {
  width: 15px;
  height: 15px;
}

.sb-on {
  background-color: #d6d6d6;
  border: 1px solid #c4c4c4;
}

.sb-sep {
  width: 1px;
  height: 22px;
  flex: none;
  background-color: #dcdcdc;
}

.sb-sep-a {
  margin-left: 2px;
}

.sb-sep-b {
  margin-left: 5px;
}

.sb-sep-c {
  margin-left: 4px;
}

.sb-arrow {
  margin-left: 6px;
}

.sb-text {
  width: 644px;
  flex: none;
  margin-left: 4px;
  font-size: 8.1px;
  white-space: nowrap;
  overflow: hidden;
}

.sb-export {
  margin-left: 4px;
}

.sb-move {
  margin-left: 3px;
}

.sb-first {
  margin-left: 4px;
}

.counts {
  width: 114px;
  flex: none;
  display: flex;
  color: #aaa;
  line-height: 10px;
}

.count {
  flex: 1;
  display: flex;
  justify-content: space-between;
  padding: 0 5px 0 3px;
}

.count svg {
  width: 10px;
  height: 8px;
}

.count-check {
  width: 6px;
  height: 6px;
  background-color: #777;
}

.sb-nav {
  margin-left: 1px;
}

.table-panel {
  flex: 1;
  position: relative;
  background-color: #fff;
  border-top: 3px solid #ccc;
}

.table-head {
  margin: 0;
  padding: 0 9px;
  background-color: #f0f0f0;
  box-sizing: content-box;
}

.table-tools {
  height: 25px;
  display: flex;
  align-items: center;
  padding-left: 7px;
  background-color: #f0f0f0;
  border-bottom: 1px solid #e2e2e2;
}

.table-tools svg {
  width: 14px;
  height: 14px;
  flex: none;
  margin-right: 13px;
}

.tt-add {
  margin-left: 3px;
}

.tt-import {
  margin-left: 2px;
}

.tt-fx {
  font-family: "Liberation Serif", serif;
  font-style: italic;
  font-size: 13px;
  color: #c4c4c4;
  margin-right: 13px;
}

.node-table {
  display: grid;
  grid-template-columns: 107px 68px 84px 84px 97px 97px 104px 103px 100px 121px;
  grid-template-rows: 21px repeat(5, 11.75px);
  line-height: 11.75px;
  width: 965px;
}

.node-table > span {
  padding: 0 6.5px 0 6px;
  white-space: nowrap;
}

.cell-head {
  display: flex;
  align-items: center;
  height: 17px;
  padding-left: 5px;
  border-right: 1px solid #e8e8e8;
}

.meta {
  width: 31px;
  flex: none;
  display: flex;
  gap: 6px;
}

.meta svg {
  width: 7px;
  height: 8px;
}

.head-name .meta {
  width: 18px;
}

.num {
  text-align: right;
}

.table-scroll {
  position: absolute;
  right: 3px;
  top: 65px;
  bottom: 0;
  width: 12px;
  background-color: #f4f4f4;
}

.table-scroll .scroll-thumb {
  top: 12px;
  height: 15px;
}
```
